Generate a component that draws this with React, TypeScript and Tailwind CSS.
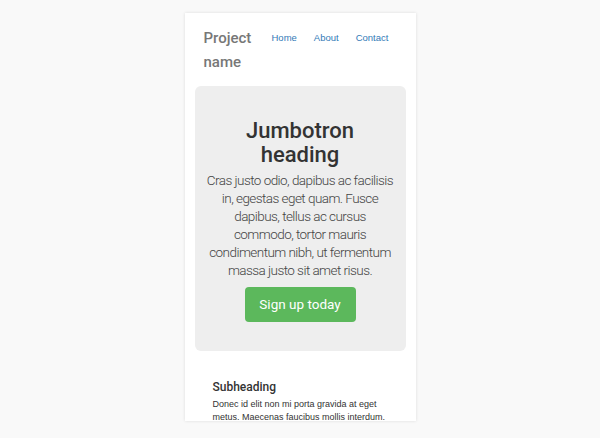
export default function App() {
	return (
		<div className="min-h-[438px] bg-[#f9f9f9] pt-[13px] font-['Liberation_Sans',Arial,sans-serif]">
			<div className="mx-auto w-[231px] h-[408px] overflow-hidden bg-white shadow-[0_0_3px_rgba(0,0,0,0.12)]">
				<header className="flex items-start pl-[19px] pt-[13px]">
					<div className="w-[56px] font-['Roboto',sans-serif] text-[15px] leading-[24px] font-medium text-[#777]">
						Project name
					</div>
					<nav className="ml-[12px] flex gap-[17px] pt-[6px] text-[9.5px] leading-[12px] text-[#337ab7]">
						<a href="#">Home</a>
						<a href="#">About</a>
						<a href="#">Contact</a>
					</nav>
				</header>

				<section className="mx-[10px] mt-[12px] rounded-[6px] bg-[#eeeeee] px-[6px] pt-[33px] pb-[29px] text-center font-['Roboto',sans-serif]">
					<h1 className="text-[22px] leading-[24px] font-medium text-[#333]">
						Jumbotron
						<br />
						heading
					</h1>
					<p className="mt-[4px] whitespace-nowrap text-[13.5px] leading-[18px] font-light tracking-[-0.55px] text-[#444]">
						Cras justo odio, dapibus ac facilisis
						<br />
						in, egestas eget quam. Fusce
						<br />
						dapibus, tellus ac cursus
						<br />
						commodo, tortor mauris
						<br />
						condimentum nibh, ut fermentum
						<br />
						massa justo sit amet risus.
					</p>
					<button className="mt-[8px] h-[35px] w-[111px] rounded-[4px] bg-[#5cb85c] text-[13.5px] text-white">
						Sign up today
					</button>
				</section>

				<div className="pl-[28px] pr-[24px] pt-[28px]">
					<h4 className="font-['Roboto',sans-serif] text-[12px] leading-[16px] font-medium text-[#333]">Subheading</h4>
					<p className="mt-[3px] text-[9px] leading-[13px] text-[#333]">
						Donec id elit non mi porta gravida at eget metus. Maecenas faucibus mollis interdum.
					</p>
				</div>
			</div>
		</div>
	);
}
